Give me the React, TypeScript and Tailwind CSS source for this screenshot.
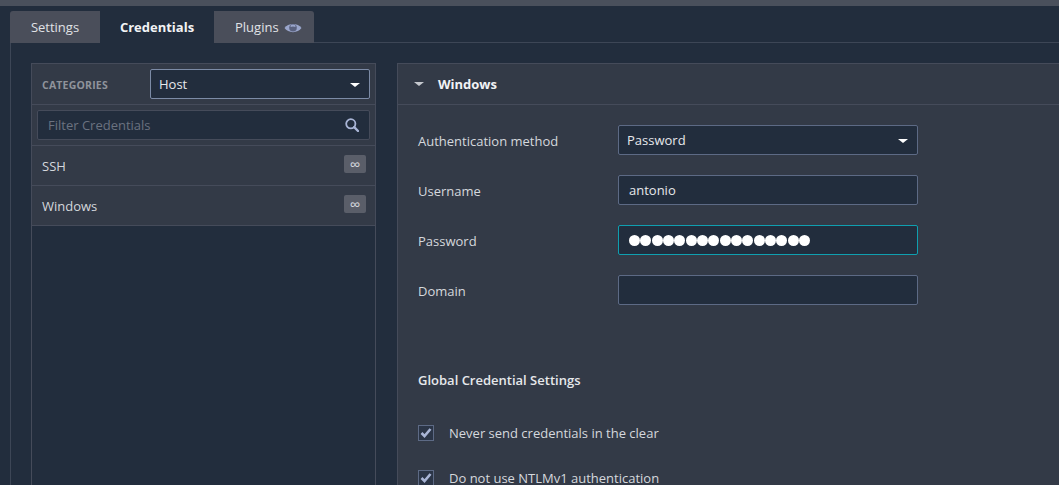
const Caret = ({ className }: { className: string }) => (
  <span className={`h-0 w-0 border-x-[5px] border-t-[4px] border-x-transparent ${className}`} />
);

const Row = ({ label, children }: { label: string; children: React.ReactNode }) => (
  <div className="flex h-[30px] items-center">
    <span className="w-[200px] pt-[3px] text-[13px] text-[#d5d8dd]">{label}</span>
    {children}
  </div>
);

const Check = ({ label }: { label: string }) => (
  <div className="flex h-4 items-center">
    <span className="flex h-4 w-4 items-center justify-center border border-[#5d6a85] bg-[#2b3547]">
      <svg width="12" height="11" viewBox="0 0 12 11">
        <path d="M1.5 6 L4.5 9 L10.5 2" fill="none" stroke="#a9b5d6" strokeWidth="2.6" />
      </svg>
    </span>
    <span className="ml-[15px] pt-[2px] text-[13px] text-[#d5d8dd]">{label}</span>
  </div>
);

const Category = ({ name }: { name: string }) => (
  <div className="flex h-10 justify-between border-b border-[#454b5a] bg-[#333a47] pl-[10px] pr-[9px]">
    <span className="pt-[11px] text-[13px] text-[#d5d8dd]">{name}</span>
    <span className="mt-[9px] flex h-[18px] w-[22px] items-center justify-center rounded-[2px] bg-[#5a5e69] text-[15px] leading-none text-[#d5d8dd]">
      ∞
    </span>
  </div>
);

export default function App() {
  return (
    <div className="h-[485px] w-[1059px] overflow-hidden bg-[#222d3d] font-['Open_Sans',sans-serif]">
      <div className="h-[6px] bg-[#4a505c]" />
      <div className="ml-[10px] mt-[5px] flex h-[32px] border-b border-[#3d4656]">
        <div className="flex h-[32px] w-[90px] items-center justify-center rounded-tl-[3px] bg-[#4a4e5a] pt-[2px] text-[13px] text-[#e0e2e6]">
          Settings
        </div>
        <div className="relative flex h-[32px] w-[114px] items-center justify-center bg-[#222d3d] pt-[2px] text-[13px] font-bold text-[#f2f3f5]">
          Credentials
        </div>
        <div className="flex h-[32px] w-[100px] items-center gap-[5px] rounded-tr-[3px] bg-[#4a4e5a] pl-[21px] pt-[2px] text-[13px] text-[#e0e2e6]">
          Plugins
          <svg width="18" height="12" viewBox="0 0 18 12">
            <path d="M0.5 6 C4 0.5 14 0.5 17.5 6 C14 11.5 4 11.5 0.5 6 Z" fill="#9aa6cc" />
            <circle cx="9" cy="5.8" r="3.8" fill="#59617e" />
            <path d="M6.6 3.2 C8 2.4 10 2.4 11.4 3.2 L11.4 5 C10 4.2 8 4.2 6.6 5 Z" fill="#9aa6cc" />
          </svg>
        </div>
      </div>
      <div className="ml-[10px] flex h-[442px] gap-[21px] border-l border-[#3d4656] pl-[20px] pt-[20px]">
        <div className="h-[440px] w-[345px] shrink-0 border-x border-t border-[#454b5a]">
          <div className="flex h-[41px] items-center justify-between border-b border-[#454b5a] bg-[#333a47] pl-[10px] pr-[5px]">
            <span className="pt-[4px] text-[10.5px] font-bold tracking-[0.2px] text-[#8f939b]">CATEGORIES</span>
            <div className="flex h-[30px] w-[220px] items-center justify-between rounded-[2px] border border-[#7c8ba6] bg-[#222d3d] pl-2 pr-[9px] pt-[2px] text-[13px] text-[#e6e8eb]">
              Host
              <Caret className="border-t-white" />
            </div>
          </div>
          <div className="flex h-[41px] items-center border-b border-[#454b5a] bg-[#333a47] px-[5px]">
            <div className="flex h-[30px] w-full items-center justify-between rounded-[2px] border border-[#454b5a] bg-[#222d3d] pl-[10px] pr-[10px] pt-[2px] text-[13px] text-[#6b7280]">
              Filter Credentials
              <svg width="14" height="14" viewBox="0 0 14 14" className="mb-[3px]">
                <circle cx="5.8" cy="5.8" r="4.6" fill="none" stroke="#a9b5d6" strokeWidth="1.8" />
                <path d="M9.2 9.2 L13 13" stroke="#a9b5d6" strokeWidth="2.4" strokeLinecap="round" />
              </svg>
            </div>
          </div>
          <Category name="SSH" />
          <Category name="Windows" />
        </div>
        <div className="h-[440px] w-[700px] shrink-0 border-l border-t border-[#454b5a] bg-[#333a47]">
          <div className="flex h-[41px] items-center border-b border-[#454b5a] pl-[16px]">
            <Caret className="border-t-[#c5c8ce]" />
            <span className="ml-[14px] pt-[2px] text-[13px] font-bold text-[#f2f3f5]">Windows</span>
          </div>
          <div className="flex flex-col gap-[20px] pl-[20px] pt-[20px]">
            <Row label="Authentication method">
              <div className="flex h-[30px] w-[300px] items-center justify-between rounded-[2px] border border-[#5d6a85] bg-[#222d3d] pl-2 pr-[9px] pt-[2px] text-[13px] text-[#e6e8eb]">
                Password
                <Caret className="border-t-white" />
              </div>
            </Row>
            <Row label="Username">
              <div className="flex h-[30px] w-[300px] items-center rounded-[2px] border border-[#5d6a85] bg-[#222d3d] pl-[10px] pt-[2px] text-[13px] text-[#e6e8eb]">
                antonio
              </div>
            </Row>
            <Row label="Password">
              <div className="flex h-[30px] w-[300px] items-center gap-[0.33px] rounded-[2px] border border-[#0f9fb0] bg-[#222d3d] pl-[10px] pt-[1px]">
                {Array.from({ length: 16 }).map((_, i) => (
                  <span key={i} className="h-[11px] w-[11px] rounded-full bg-white" />
                ))}
              </div>
            </Row>
            <Row label="Domain">
              <div className="h-[30px] w-[300px] rounded-[2px] border border-[#5d6a85] bg-[#222d3d]" />
            </Row>
          </div>
          <div className="pl-[20px] pt-[66px]">
            <div className="text-[13px] font-semibold text-[#e6e8eb]">Global Credential Settings</div>
            <div className="mt-[34px] flex flex-col gap-[29px]">
              <Check label="Never send credentials in the clear" />
              <Check label="Do not use NTLMv1 authentication" />
            </div>
          </div>
        </div>
      </div>
    </div>
  );
}
